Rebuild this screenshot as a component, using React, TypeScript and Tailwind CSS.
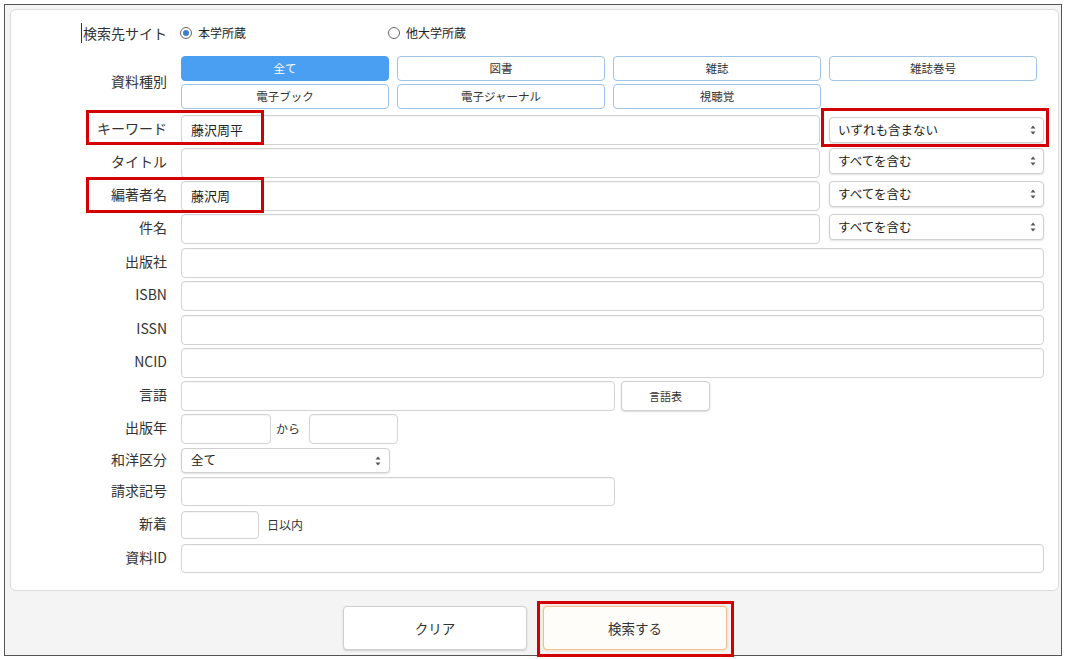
import React from "react";

const jp = "font-['Noto_Sans_CJK_JP','Noto_Sans',sans-serif]";

function Arrows() {
  return (
    <svg width="6" height="12" viewBox="0 0 6 12" className="shrink-0">
      <path d="M3 1.5 L5.5 4.5 H0.5 Z" fill="#555" />
      <path d="M3 10.5 L5.5 7.5 H0.5 Z" fill="#555" />
    </svg>
  );
}

function Select({
  value,
  className = "",
  size = "h-[26px] pl-[8px] pr-[7px]",
}: {
  value: string;
  className?: string;
  size?: string;
}) {
  return (
    <div
      className={`flex items-center justify-between ${size} bg-white border border-[#cfcfcf] rounded-[4px] shadow-[0_1px_2px_rgba(0,0,0,0.12)] text-[12.5px] text-[#222] ${className}`}
    >
      <span>{value}</span>
      <Arrows />
    </div>
  );
}

function TextBox({
  value = "",
  className = "",
  height = "h-[30px]",
}: {
  value?: string;
  className?: string;
  height?: string;
}) {
  return (
    <div
      className={`flex items-center ${height} pl-[9px] bg-white border border-[#d2d2d2] rounded-[4px] shadow-[inset_0_1px_1px_rgba(0,0,0,0.04)] text-[13px] text-[#222] ${className}`}
    >
      {value}
    </div>
  );
}

function Label({ children }: { children: React.ReactNode }) {
  return (
    <div className="w-[170px] shrink-0 pr-[14px] pb-[4px] text-right text-[14px] text-[#333] leading-none">
      {children}
    </div>
  );
}

function Row({
  label,
  className = "",
  children,
}: {
  label: React.ReactNode;
  className?: string;
  children: React.ReactNode;
}) {
  return (
    <div className={`relative flex items-center ${className}`}>
      <Label>{label}</Label>
      {children}
    </div>
  );
}

function RedBox({ className }: { className: string }) {
  return <div className={`absolute border-[3px] border-[#d40000] pointer-events-none ${className}`} />;
}

function Radio({ checked, label }: { checked?: boolean; label: string }) {
  return (
    <div className="flex items-center gap-[6px]">
      <span className="flex items-center justify-center w-[12px] h-[12px] rounded-full border border-[#666] bg-white">
        {checked && <span className="w-[6px] h-[6px] rounded-full bg-[#3a7fd6]" />}
      </span>
      <span className="text-[12px] text-[#222]">{label}</span>
    </div>
  );
}

const kinds = ["全て", "図書", "雑誌", "雑誌巻号", "電子ブック", "電子ジャーナル", "視聴覚"];

export default function App() {
  return (
    <div className={`pt-[4px] pl-[4px] bg-white w-[1069px] h-[659px] ${jp}`}>
      <div className="relative w-[1058px] h-[652px] border border-[#555] bg-[#f4f4f4]">
        {/* search form panel */}
        <div className="ml-[5px] mt-[4px] w-[1049px] h-[582px] bg-white border border-[#dcdcdc] rounded-[6px] pt-[11px]">
          {/* target site */}
          <div className="flex items-center h-[24px]">
            <div className="w-[170px] shrink-0 pr-[14px] flex justify-end items-center">
              <span className="w-[1px] h-[20px] bg-[#333] mr-[1px]" />
              <span className="text-[14px] text-[#333] leading-none">検索先サイト</span>
            </div>
            <div className="w-[208px] -ml-[1px]">
              <Radio checked label="本学所蔵" />
            </div>
            <Radio label="他大学所蔵" />
          </div>

          {/* material type */}
          <div className="flex items-center mt-[11px]">
            <Label>資料種別</Label>
            <div className="grid grid-cols-[repeat(4,208px)] gap-x-[8px] gap-y-[3px]">
              {kinds.map((k, i) => (
                <div
                  key={k}
                  className={
                    i === 0
                      ? "flex items-center justify-center h-[25px] rounded-[4px] bg-[#4a9ff2] border border-[#4a9ff2] text-white text-[11.5px]"
                      : "flex items-center justify-center h-[25px] rounded-[4px] bg-white border border-[#9ec4e6] text-[#333] text-[11.5px]"
                  }
                >
                  {k}
                </div>
              ))}
            </div>
          </div>

          <Row label="キーワード" className="mt-[6px]">
            <TextBox value="藤沢周平" className="w-[639px]" />
            <Select value="いずれも含まない" className="w-[215px] ml-[9px]" />
            <RedBox className="left-[75px] -top-[5px] w-[178px] h-[35px]" />
            <RedBox className="left-[810px] -top-[7px] w-[228px] h-[39px]" />
          </Row>
          <Row label="タイトル" className="mt-[3px]">
            <TextBox className="w-[639px]" />
            <Select value="すべてを含む" className="w-[215px] ml-[9px] self-start" />
          </Row>
          <Row label="編著者名" className="mt-[3px]">
            <TextBox value="藤沢周" className="w-[639px]" />
            <Select value="すべてを含む" className="w-[215px] ml-[9px] self-start" />
            <RedBox className="left-[75px] -top-[4px] w-[178px] h-[36px]" />
          </Row>
          <Row label="件名" className="mt-[3px]">
            <TextBox className="w-[639px]" />
            <Select value="すべてを含む" className="w-[215px] ml-[9px] self-start" />
          </Row>
          <Row label="出版社" className="mt-[4px]">
            <TextBox className="w-[863px]" />
          </Row>
          <Row label="ISBN" className="mt-[3px]">
            <TextBox className="w-[863px]" />
          </Row>
          <Row label="ISSN" className="mt-[4px]">
            <TextBox className="w-[863px]" />
          </Row>
          <Row label="NCID" className="mt-[3px]">
            <TextBox className="w-[863px]" />
          </Row>
          <Row label="言語" className="mt-[3px]">
            <TextBox className="w-[434px]" />
            <div className="ml-[6px] flex items-center justify-center w-[89px] h-[30px] bg-white border border-[#cfcfcf] rounded-[4px] shadow-[0_1px_2px_rgba(0,0,0,0.15)] text-[11px] text-[#333]">
              言語表
            </div>
          </Row>
          <Row label="出版年" className="mt-[3px]">
            <TextBox className="w-[90px]" />
            <span className="ml-[5px] w-[33px] text-[12px] text-[#333]">から</span>
            <TextBox className="w-[89px]" />
          </Row>
          <Row label="和洋区分" className="mt-[4px]">
            <Select value="全て" className="w-[209px]" size="h-[25px] pl-[9px] pr-[8px]" />
          </Row>
          <Row label="請求記号" className="mt-[4px]">
            <TextBox className="w-[434px]" height="h-[29px]" />
          </Row>
          <Row label="新着" className="mt-[5px]">
            <TextBox className="w-[78px]" height="h-[28px]" />
            <span className="ml-[8px] text-[12px] text-[#333]">日以内</span>
          </Row>
          <Row label="資料ID" className="mt-[5px]">
            <TextBox className="w-[863px]" height="h-[29px]" />
          </Row>
        </div>

        {/* actions */}
        <div className="flex justify-center gap-[16px] mt-[15px] pl-[4px]">
          <div className="flex items-center justify-center w-[184px] h-[44px] bg-white border border-[#cfcfcf] rounded-[4px] shadow-[0_1px_2px_rgba(0,0,0,0.15)] text-[13.5px] text-[#333]">
            クリア
          </div>
          <div className="relative">
            <div className="flex items-center justify-center w-[184px] h-[44px] bg-[#fffdfa] border border-[#f2c08f] rounded-[4px] shadow-[0_0_3px_rgba(240,160,90,0.5)] text-[13.5px] text-[#333]">
              検索する
            </div>
            <RedBox className="-left-[6px] -top-[5px] w-[197px] h-[56px]" />
          </div>
        </div>
      </div>
    </div>
  );
}
